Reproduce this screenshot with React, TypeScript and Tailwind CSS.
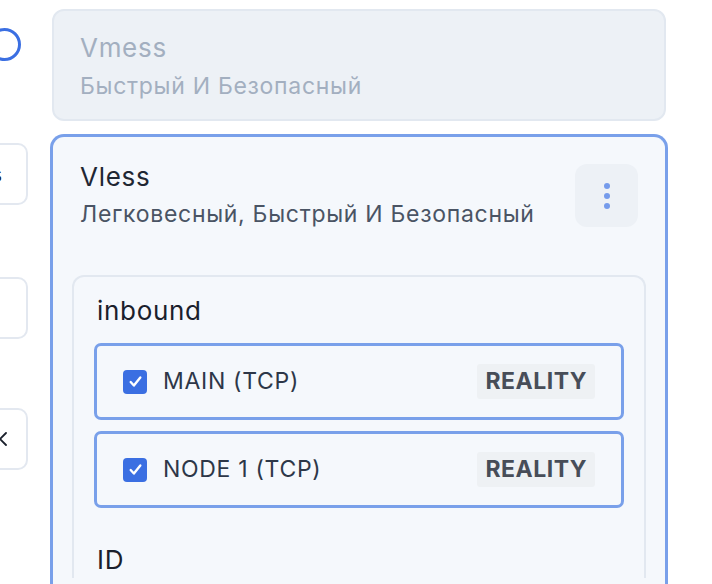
import React from "react";

const font = { fontFamily: "Inter, 'Noto Sans', sans-serif" };

function Item({ label }: { label: string }) {
  return (
    <div className="flex h-[77px] items-center rounded-[7px] border-[3px] border-[#79a0ea] pl-[26px] pr-[26px]">
      <div className="flex h-[24px] w-[24px] shrink-0 items-center justify-center rounded-[4px] bg-[#3b6fe2]">
        <svg width="15" height="15" viewBox="0 0 14 14" fill="none">
          <path d="M2.5 7.5 L5.5 10.8 L11.5 3.2" stroke="white" strokeWidth="2.2" strokeLinecap="round" strokeLinejoin="round" />
        </svg>
      </div>
      <span className="ml-[16px] text-[23px] leading-none tracking-[0.7px] text-[#2d3748]">{label}</span>
      <span className="ml-auto flex h-[35px] items-center rounded-[3px] bg-[#eef1f4] px-[8px] text-[23px] font-bold tracking-[0.5px] text-[#474d58]">
        REALITY
      </span>
    </div>
  );
}

export default function App() {
  return (
    <div className="flex h-[584px] w-[712px] overflow-hidden bg-white" style={font}>
      <div className="-ml-[42px] flex w-[70px] shrink-0 flex-col">
        <div className="mr-[7px] mt-[28px] h-[33px] w-[33px] self-end rounded-full border-[3px] border-[#3b6fe2]" />
        <div className="mt-[82px] flex h-[62px] items-center justify-end rounded-[10px] border-2 border-[#e3e8f0] pr-[24px] text-[22px] text-[#1a202c]">
          s
        </div>
        <div className="mt-[72px] h-[62px] rounded-[10px] border-2 border-[#e3e8f0]" />
        <div className="mt-[69px] flex h-[62px] items-center justify-end rounded-[10px] border-2 border-[#e3e8f0] pr-[18px]">
          <svg width="16" height="16" viewBox="0 0 16 16" fill="none">
            <path d="M2 2 L14 14 M14 2 L2 14" stroke="#1a202c" strokeWidth="1.8" strokeLinecap="round" />
          </svg>
        </div>
      </div>
      <div className="ml-[22px] flex w-[618px] shrink-0 flex-col pt-[9px]">
        <div className="mx-[2px] h-[112px] rounded-[12px] border-2 border-[#e2e8f0] bg-[#edf1f6] px-[26px] pt-[21px]">
          <div className="text-[26px] leading-[32px] tracking-[0.7px] text-[#a3afc0]">Vmess</div>
          <div className="mt-[8px] text-[23px] leading-[28px] tracking-[0.7px] text-[#a3afc0]">Быстрый И Безопасный</div>
        </div>
        <div className="mt-[13px] flex-1 rounded-t-[14px] border-[3px] border-b-0 border-[#79a0ea] bg-[#f5f8fc]">
          <div className="flex justify-between pl-[27px] pr-[27px] pt-[27px]">
            <div>
              <div className="-mt-[3px] text-[26px] leading-[32px] tracking-[0.7px] text-[#1f2733]">Vless</div>
              <div className="mt-[7px] text-[23px] leading-[28px] tracking-[0.7px] text-[#4a5464]">Легковесный, Быстрый И Безопасный</div>
            </div>
            <div className="flex h-[63px] w-[63px] shrink-0 flex-col items-center justify-center gap-[4px] rounded-[12px] bg-[#edf1f6]">
              <span className="h-[6px] w-[6px] rounded-full bg-[#759beb]" />
              <span className="h-[6px] w-[6px] rounded-full bg-[#759beb]" />
              <span className="h-[6px] w-[6px] rounded-full bg-[#759beb]" />
            </div>
          </div>
          <div className="mx-[19px] mt-[47px] rounded-t-[12px] border-2 border-b-0 border-[#e2e8f0] px-[20px] pt-[16px]">
            <div className="ml-[3px] text-[26px] leading-[36px] tracking-[0.7px] text-[#1a202c]">inbound</div>
            <div className="mt-[14px] flex flex-col gap-[11px]">
              <Item label="MAIN (TCP)" />
              <Item label="NODE 1 (TCP)" />
            </div>
            <div className="ml-[3px] mt-[34px] text-[26px] leading-[36px] tracking-[0.7px] text-[#1a202c]">ID</div>
          </div>
        </div>
      </div>
    </div>
  );
}
